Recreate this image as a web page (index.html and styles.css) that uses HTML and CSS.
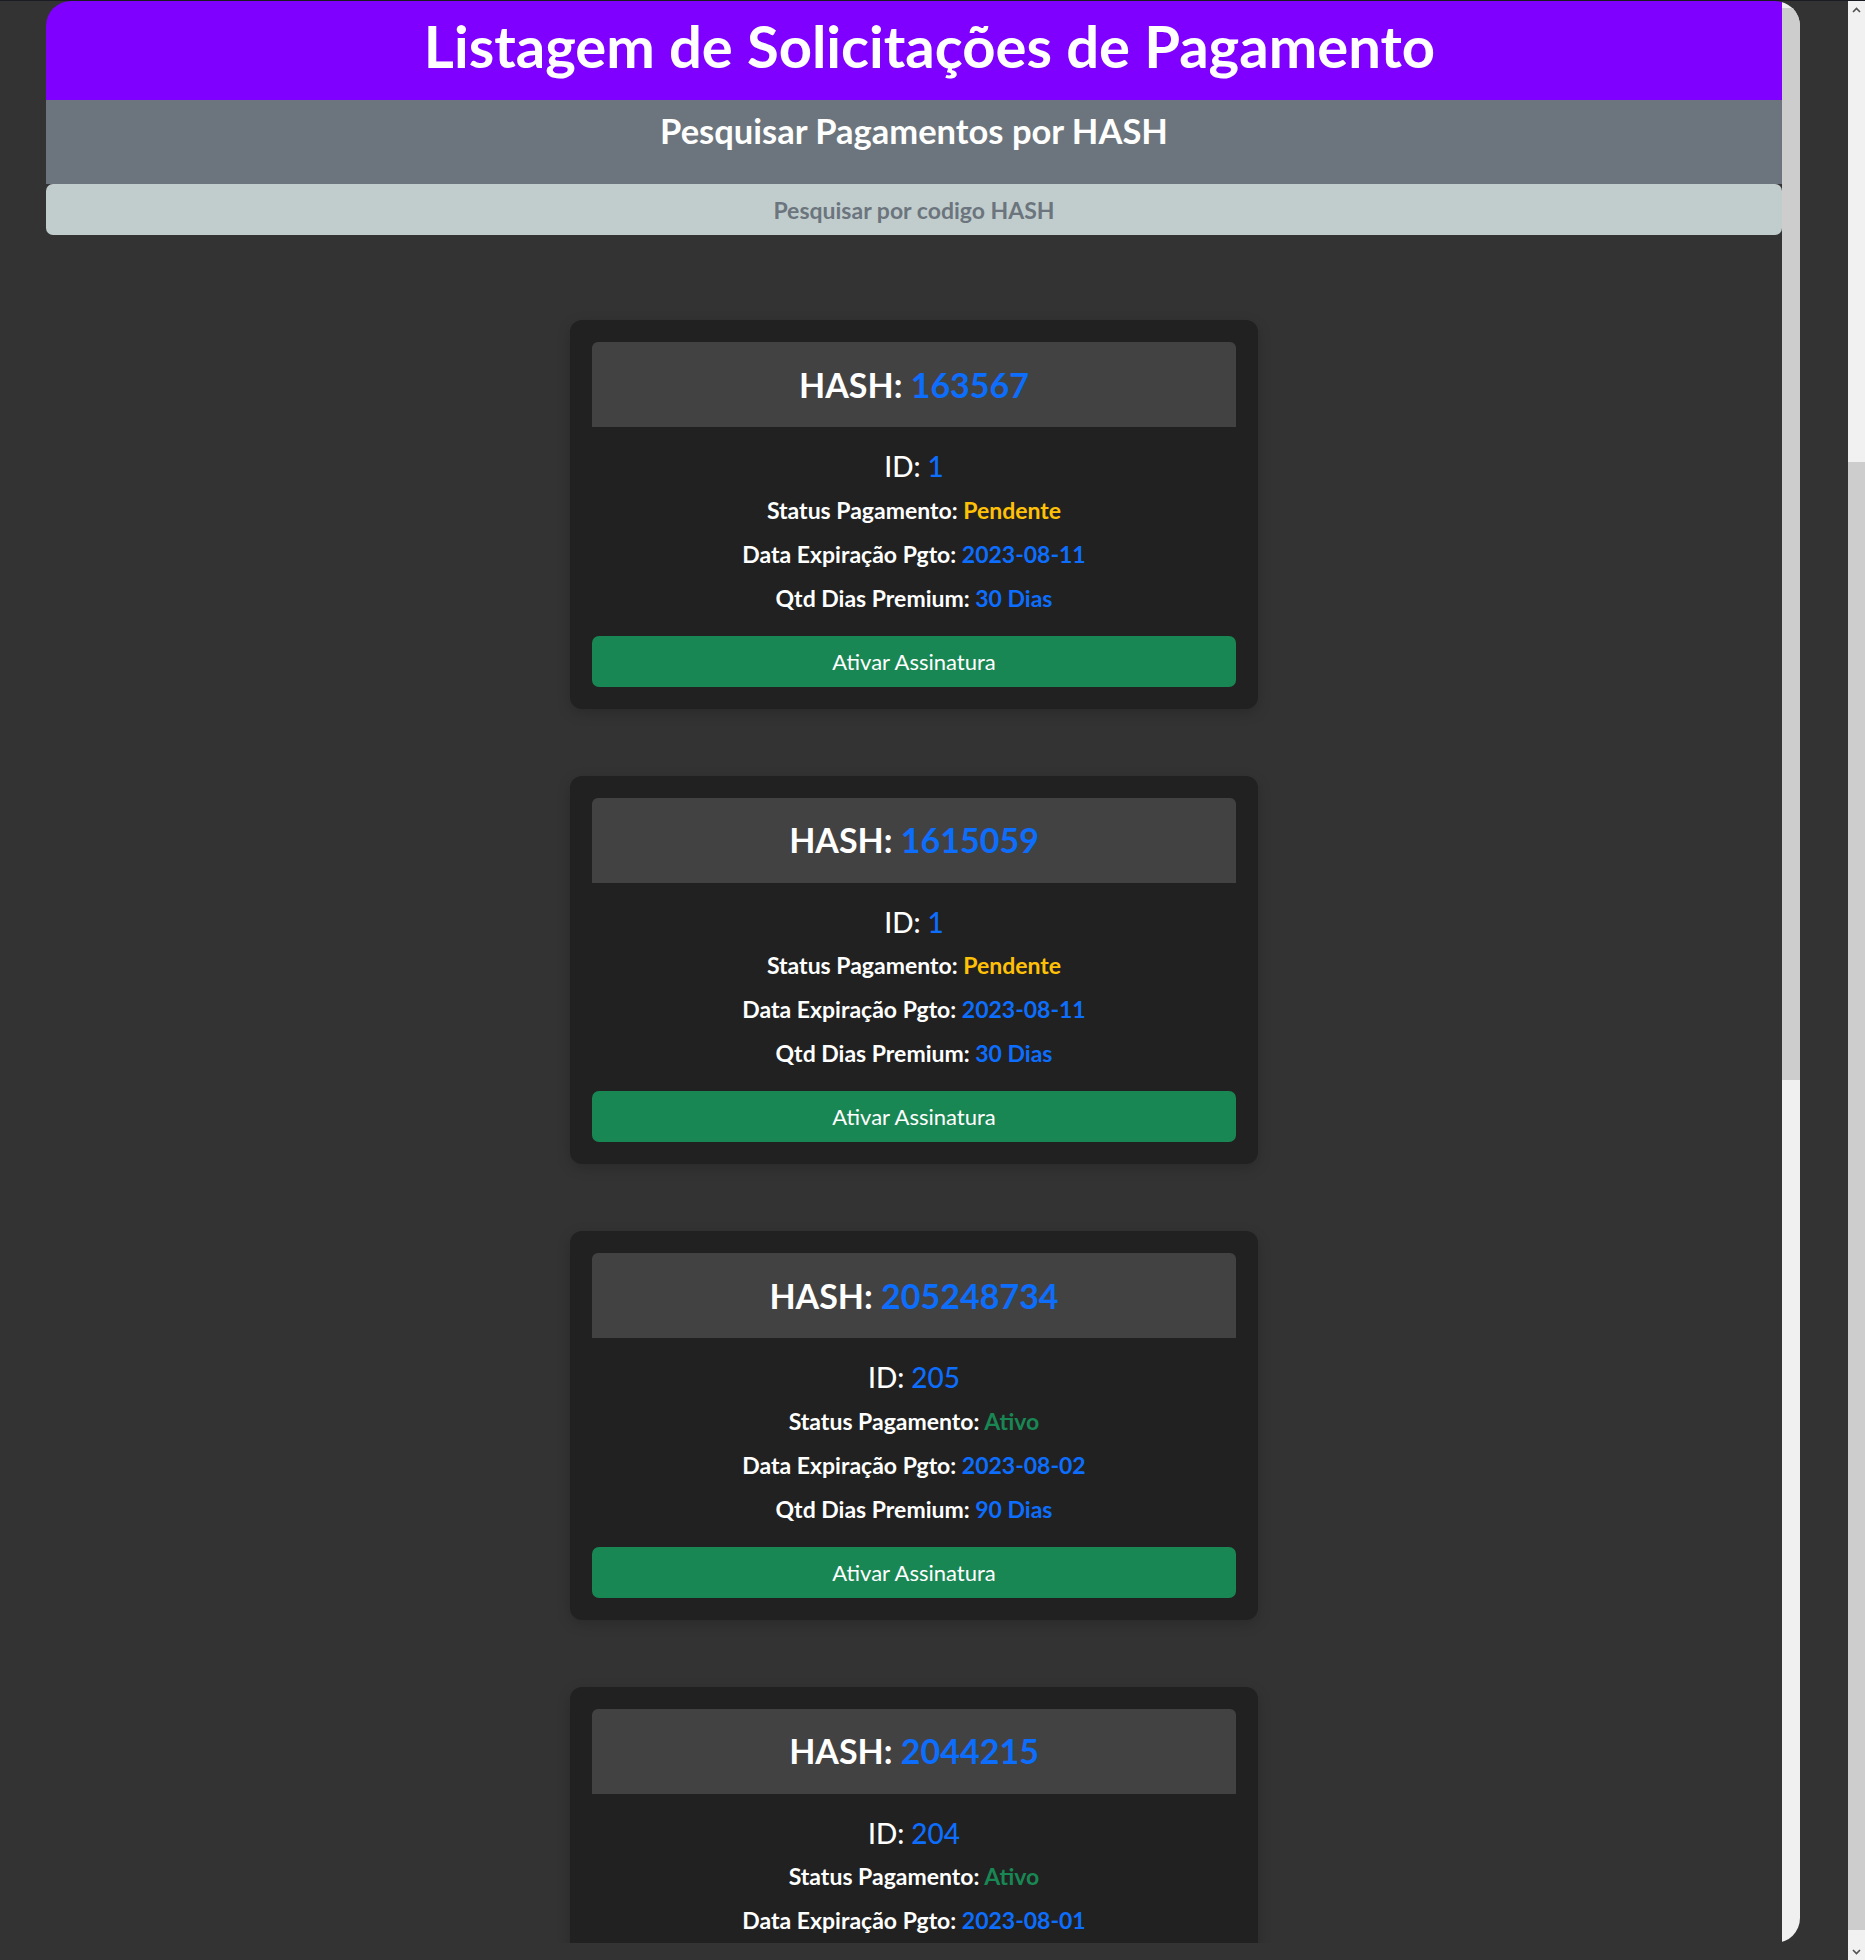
FILE: index.html
```html
<!DOCTYPE html>
<html lang="pt-BR">
<head>
<meta charset="utf-8">
<title>Listagem de Solicitações de Pagamento</title>
<link rel="stylesheet" href="styles.css">
</head>
<body>
<div class="frame">
  <main class="panel">
    <div class="panel-content">
      <header class="hero"><h1 class="hero-title">Listagem de Solicitações de Pagamento</h1></header>
      <section class="search">
        <h2 class="search-title">Pesquisar Pagamentos por HASH</h2>
      </section>
      <input class="search-input" type="text" placeholder="Pesquisar por codigo HASH">
      <div class="list">
        <article class="card">
          <div class="card-header"><h3 class="hash">HASH: <span class="blue">163567</span></h3></div>
          <div class="card-body">
            <h4 class="id">ID: <span class="blue">1</span></h4>
            <p class="info">Status Pagamento: <span class="yellow">Pendente</span></p>
            <p class="info">Data Expiração Pgto: <span class="blue">2023-08-11</span></p>
            <p class="info">Qtd Dias Premium: <span class="blue">30 Dias</span></p>
            <button class="btn">Ativar Assinatura</button>
          </div>
        </article>
        <article class="card">
          <div class="card-header"><h3 class="hash">HASH: <span class="blue">1615059</span></h3></div>
          <div class="card-body">
            <h4 class="id">ID: <span class="blue">1</span></h4>
            <p class="info">Status Pagamento: <span class="yellow">Pendente</span></p>
            <p class="info">Data Expiração Pgto: <span class="blue">2023-08-11</span></p>
            <p class="info">Qtd Dias Premium: <span class="blue">30 Dias</span></p>
            <button class="btn">Ativar Assinatura</button>
          </div>
        </article>
        <article class="card">
          <div class="card-header"><h3 class="hash">HASH: <span class="blue">205248734</span></h3></div>
          <div class="card-body">
            <h4 class="id">ID: <span class="blue">205</span></h4>
            <p class="info">Status Pagamento: <span class="green">Ativo</span></p>
            <p class="info">Data Expiração Pgto: <span class="blue">2023-08-02</span></p>
            <p class="info">Qtd Dias Premium: <span class="blue">90 Dias</span></p>
            <button class="btn">Ativar Assinatura</button>
          </div>
        </article>
        <article class="card">
          <div class="card-header"><h3 class="hash">HASH: <span class="blue">2044215</span></h3></div>
          <div class="card-body">
            <h4 class="id">ID: <span class="blue">204</span></h4>
            <p class="info">Status Pagamento: <span class="green">Ativo</span></p>
            <p class="info">Data Expiração Pgto: <span class="blue">2023-08-01</span></p>
          </div>
        </article>
      </div>
    </div>
    <div class="panel-rail">
      <div class="panel-thumb"></div>
    </div>
  </main>
  <div class="page-rail">
    <div class="rail-btn">
      <svg width="9" height="6" viewBox="0 0 9 6"><path d="M1 5 L4.5 1.5 L8 5" fill="none" stroke="#505050" stroke-width="1.6"/></svg>
    </div>
    <div class="rail-gap"></div>
    <div class="page-thumb"></div>
    <div class="rail-fill"></div>
    <div class="rail-btn">
      <svg width="9" height="6" viewBox="0 0 9 6"><path d="M1 1 L4.5 4.5 L8 1" fill="none" stroke="#505050" stroke-width="1.6"/></svg>
    </div>
  </div>
</div>
</body>
</html>
```
FILE: styles.css
```css
html, body {
  margin: 0;
  background: #333333;
  height: 1960px;
  overflow: hidden;
}
body {
  font-family: Lato, "Noto Sans", "Liberation Sans", sans-serif;
  color: #ffffff;
}
.frame {
  border-top: 1px solid #1b1b24;
  padding-left: 46px;
  display: flex;
  align-items: flex-start;
  height: 1959px;
}
.panel {
  width: 1754px;
  height: 1942px;
  border-radius: 25px;
  overflow: hidden;
  display: flex;
  flex: 0 0 auto;
}
.panel-content {
  width: 1736px;
  height: 1942px;
  overflow: hidden;
  flex: 0 0 auto;
}
.panel-rail {
  width: 18px;
  flex: 0 0 auto;
  background: #f0f0f0;
  padding-top: 7px;
  box-sizing: border-box;
}
.panel-thumb {
  height: 1072px;
  background: #cdcdcd;
}
.page-rail {
  margin-left: 48px;
  width: 17px;
  height: 1959px;
  background: #f1f1f1;
  display: flex;
  flex-direction: column;
  flex: 0 0 auto;
}
.rail-btn {
  height: 17px;
  display: flex;
  align-items: center;
  justify-content: center;
  flex: 0 0 auto;
}
.rail-gap {
  height: 444px;
  flex: 0 0 auto;
}
.page-thumb {
  height: 1468px;
  background: #cdcdcd;
  flex: 0 0 auto;
}
.rail-fill {
  flex: 1 1 auto;
}
.hero {
  background: #7f00ff;
  height: 99px;
  display: flex;
  align-items: center;
  justify-content: center;
  padding-left: 31px;
  padding-bottom: 10px;
  box-sizing: border-box;
}
.hero-title {
  margin: 0;
  font-size: 58px;
  font-weight: 700;
  line-height: 1;
}
.search {
  background: #6c757d;
  height: 84px;
  display: flex;
  justify-content: center;
  padding-top: 10px;
  box-sizing: border-box;
}
.search-title {
  margin: 0;
  font-size: 34.5px;
  font-weight: 700;
  line-height: 1.2;
}
.search-input {
  display: block;
  box-sizing: border-box;
  width: 100%;
  height: 51px;
  margin: 0;
  border: none;
  border-radius: 7px;
  background: #c1cdcd;
  text-align: center;
  font-family: inherit;
  font-size: 23px;
  font-weight: 700;
  color: #6c757d;
}
.search-input::placeholder {
  color: #6c757d;
  opacity: 1;
}
.list {
  display: flex;
  flex-direction: column;
  align-items: center;
  gap: 67px;
  padding: 85px 0 85px;
}
.card {
  width: 688px;
  box-sizing: border-box;
  background: #212121;
  border-radius: 12px;
  padding: 22px;
  box-shadow: 0 4px 14px rgba(0, 0, 0, 0.18);
}
.card-header {
  background: #424242;
  height: 85px;
  border-radius: 6px 6px 0 0;
  display: flex;
  align-items: center;
  justify-content: center;
}
.hash {
  margin: 0;
  font-size: 34px;
  font-weight: 700;
  line-height: 1;
}
.card-body {
  display: flex;
  flex-direction: column;
  align-items: center;
}
.id {
  margin: 23px 0 0;
  font-size: 28px;
  font-weight: 500;
  line-height: 1.2;
}
.info {
  margin: 9px 0 0;
  font-size: 23px;
  font-weight: 700;
  line-height: 35px;
}
.blue { color: #0d6efd; }
.yellow { color: #ffc107; }
.green { color: #198754; }
.btn {
  margin-top: 20px;
  width: 100%;
  height: 51px;
  border: none;
  border-radius: 7px;
  background: #198754;
  color: #ffffff;
  font-family: inherit;
  font-size: 22px;
  font-weight: 400;
}
```
